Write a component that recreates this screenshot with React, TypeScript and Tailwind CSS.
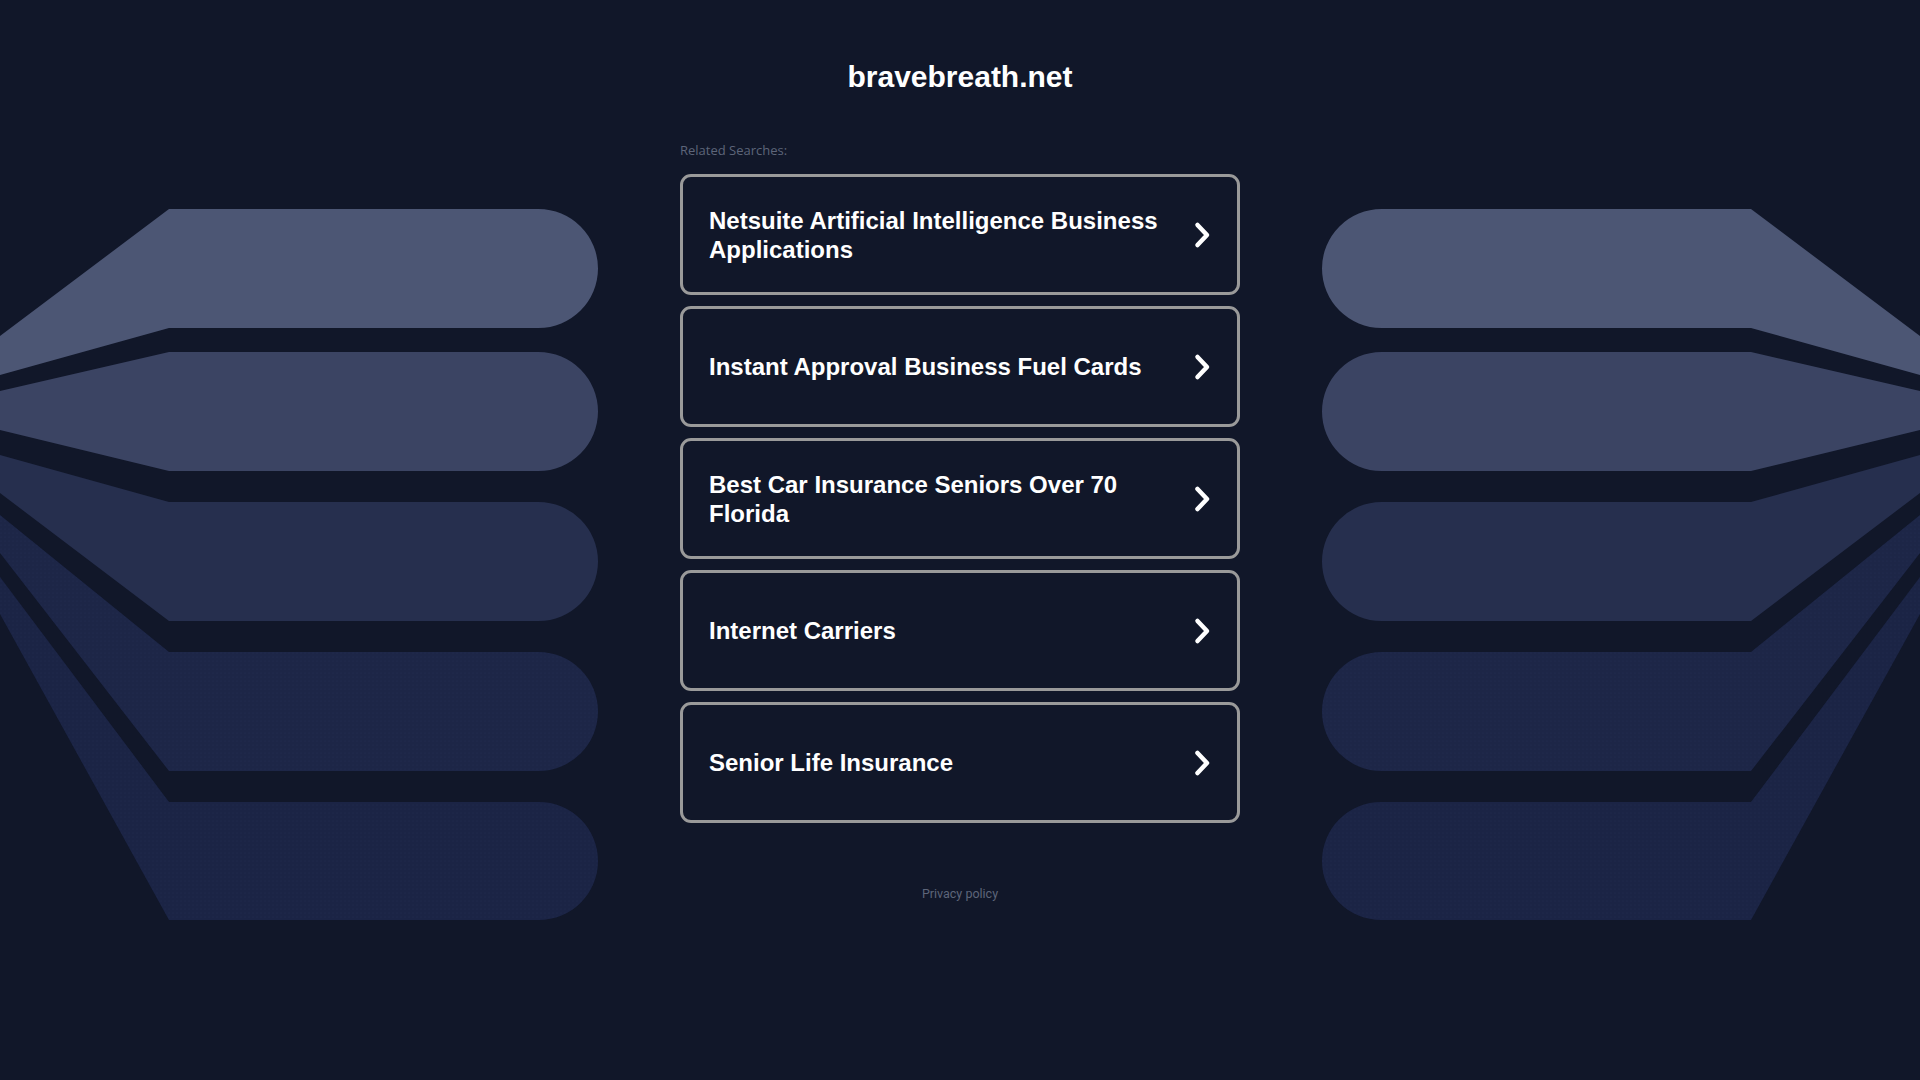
import React from 'react';

const shapes = [
  { t: 209, b: 328, lt: 336, lb: 375, fill: '#4c5674' },
  { t: 352, b: 471, lt: 391, lb: 430, fill: '#3b4463' },
  { t: 502, b: 621, lt: 455, lb: 493, fill: '#262f4e' },
  { t: 652, b: 771, lt: 515, lb: 553, fill: '#1d2647' },
  { t: 802, b: 920, lt: 577, lb: 614, fill: '#1b2445' },
];

const searches = [
  'Netsuite Artificial Intelligence Business Applications',
  'Instant Approval Business Fuel Cards',
  'Best Car Insurance Seniors Over 70 Florida',
  'Internet Carriers',
  'Senior Life Insurance',
];

function SideArt({ flip }: { flip?: boolean }) {
  return (
    <svg
      width="598"
      height="930"
      viewBox="0 0 598 930"
      className={flip ? 'shrink-0 -scale-x-100' : 'shrink-0'}
    >
      <defs>
        <pattern id={flip ? 'dotsR' : 'dotsL'} width="4" height="4" patternUnits="userSpaceOnUse">
          <circle cx="1" cy="1" r="0.6" fill="#2a3458" />
        </pattern>
      </defs>
      {shapes.map((s, i) => {
        const r = (s.b - s.t) / 2;
        const d = `M0 ${s.lt} L169 ${s.t} L${598 - r} ${s.t} A${r} ${r} 0 0 1 ${598 - r} ${s.b} L169 ${s.b} L0 ${s.lb} Z`;
        return (
          <g key={i}>
            <path d={d} fill={s.fill} />
            {i >= 3 && <path d={d} fill={`url(#${flip ? 'dotsR' : 'dotsL'})`} opacity="0.5" />}
          </g>
        );
      })}
    </svg>
  );
}

function Chevron() {
  return (
    <svg width="19" height="28" viewBox="0 0 19 28" className="shrink-0">
      <polyline
        points="4.5,4 14,14 4.5,24"
        fill="none"
        stroke="white"
        strokeWidth="4.5"
        strokeLinecap="round"
        strokeLinejoin="round"
      />
    </svg>
  );
}

export default function App() {
  return (
    <div className="min-h-screen bg-[#111729] flex justify-center items-start gap-[82px] overflow-hidden">
      <SideArt />
      <div className="w-[560px] shrink-0 flex flex-col">
        <h1 className="pt-[60px] text-center text-[30px] leading-[34px] font-bold text-white font-['Liberation_Sans',Arial,sans-serif]">
          bravebreath.net
        </h1>
        <p className="mt-[48px] text-[13px] leading-[16px] text-[#5d6579] font-['Open_Sans',sans-serif]">
          Related Searches:
        </p>
        <div className="mt-[16px] flex flex-col gap-[11px]">
          {searches.map((s) => (
            <a
              key={s}
              href="#"
              className="h-[121px] flex items-center justify-between gap-6 border-[3px] border-[#9a9a9a] rounded-[11px] pl-[26px] pr-[25px]"
            >
              <span className="text-white font-bold text-[24px] leading-[29px] font-['Liberation_Sans',Arial,sans-serif]">
                {s}
              </span>
              <Chevron />
            </a>
          ))}
        </div>
        <p className="mt-[63px] text-center text-[12.5px] leading-[16px] text-[#5d6579] font-['Roboto',sans-serif]">
          Privacy policy
        </p>
      </div>
      <SideArt flip />
    </div>
  );
}
